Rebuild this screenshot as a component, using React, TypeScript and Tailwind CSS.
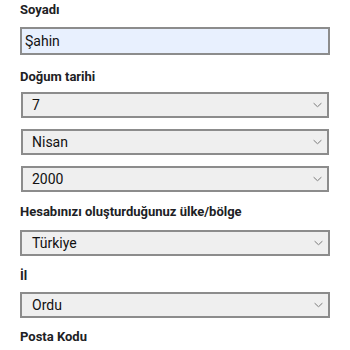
const font = { fontFamily: 'Roboto, "Noto Sans", sans-serif' }

function Label({ children, className = '' }: { children: React.ReactNode; className?: string }) {
  return (
    <div className={`text-[13px] font-bold leading-4 text-[#202124] ${className}`}>{children}</div>
  )
}

function Chevron() {
  return (
    <svg width="9" height="5" viewBox="0 0 9 5" className="absolute right-[5px] top-1/2 -translate-y-1/2">
      <path d="M0.5 0.5 L4.5 4.3 L8.5 0.5" fill="none" stroke="#7a7a7a" strokeWidth="1" />
    </svg>
  )
}

function Select({ value, className = '' }: { value: string; className?: string }) {
  return (
    <div
      className={`relative flex h-[26px] items-center border-2 border-[#8c8c8c] bg-[#efefef] pl-[9px] text-[14px] text-[#111] ${className}`}
    >
      {value}
      <Chevron />
    </div>
  )
}

export default function App() {
  return (
    <div className="h-[350px] w-[350px] overflow-hidden bg-white px-5 pt-[2px]" style={font}>
      <Label>Soyadı</Label>
      <div className="mt-[9px] flex h-[28px] items-center border-2 border-[#8c8c8c] bg-[#e8f0fe] pl-[3px] text-[14px] text-[#111]">
        Şahin
      </div>

      <Label className="mt-[14px]">Doğum tarihi</Label>
      <div className="mx-px mt-[7px] flex flex-col gap-[11px]">
        <Select value="7" />
        <Select value="Nisan" />
        <Select value="2000" />
      </div>

      <Label className="mt-3">Hesabınızı oluşturduğunuz ülke/bölge</Label>
      <Select value="Türkiye" className="mt-[10px] pl-[10px]" />

      <Label className="mt-3">İl</Label>
      <Select value="Ordu" className="mt-2 pl-[10px]" />

      <Label className="mt-[11px]">Posta Kodu</Label>
    </div>
  )
}
